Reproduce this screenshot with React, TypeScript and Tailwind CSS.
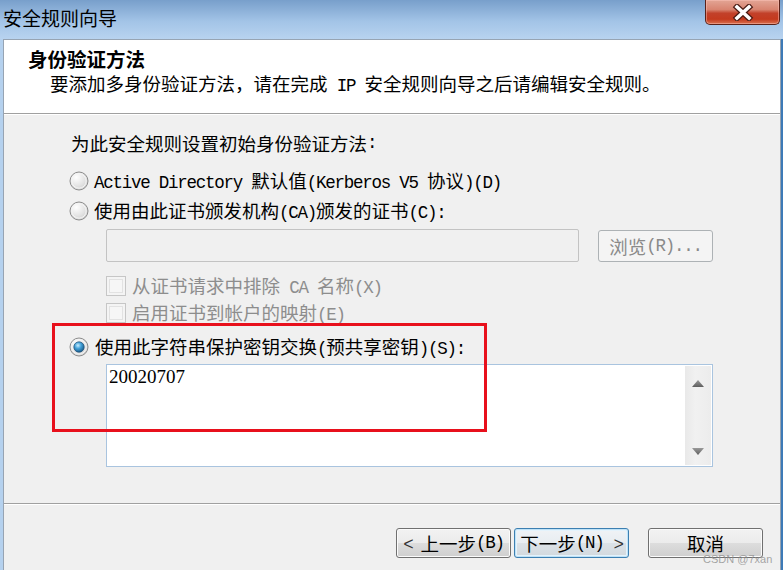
import React from "react";

const CJK = "font-['Noto_Sans_CJK_SC','Noto_Sans_CJK_JP',sans-serif]";

function M({ s }: { s: string }) {
  const parts = s.match(/[\x00-\x7F]+|[^\x00-\x7F]+/g) || [];
  return (
    <>
      {parts.map((p, i) =>
        /^[\x00-\x7F]+$/.test(p) ? (
          <span
            key={i}
            className="font-['Liberation_Mono',monospace] text-[17.5px] tracking-[-1.25px] whitespace-pre"
          >
            {p}
          </span>
        ) : (
          <span key={i}>{p}</span>
        )
      )}
    </>
  );
}

function Radio({ checked }: { checked?: boolean }) {
  return (
    <svg width="20" height="20" viewBox="0 0 20 20" className="shrink-0">
      <defs>
        <radialGradient id="rf" cx="0.35" cy="0.3" r="0.85">
          <stop offset="0" stopColor="#ffffff" />
          <stop offset="0.55" stopColor="#e4e4e4" />
          <stop offset="1" stopColor="#c8c8c8" />
        </radialGradient>
        <radialGradient id="rd" cx="0.4" cy="0.35" r="0.75">
          <stop offset="0" stopColor="#c8eeff" />
          <stop offset="0.4" stopColor="#45a3da" />
          <stop offset="1" stopColor="#0f4a78" />
        </radialGradient>
      </defs>
      <circle cx="10" cy="10" r="9" fill="url(#rf)" stroke="#8c8c8c" strokeWidth="1" />
      <circle cx="10" cy="10" r="7.2" fill="none" stroke="#f6f6f6" strokeWidth="1" />
      {checked && <circle cx="10" cy="10" r="5.2" fill="url(#rd)" stroke="#1c4d74" strokeWidth="0.7" />}
    </svg>
  );
}

function Check() {
  return (
    <div className="w-[20px] h-[20px] shrink-0 border border-[#c6c6c6] bg-[#f4f4f4] p-[2px]">
      <div className="w-full h-full border border-[#e2e2e2] bg-[#f6f6f6]" />
    </div>
  );
}

function Btn({
  children,
  def,
  className,
}: {
  children: React.ReactNode;
  def?: boolean;
  className?: string;
}) {
  return (
    <div
      className={
        "h-[30px] w-[115px] rounded-[3px] flex items-center justify-center text-[18.5px] leading-[22px] text-black " +
        (def
          ? "border border-[#3c7fb1] shadow-[inset_0_0_0_1px_#bfe2f7,inset_0_0_0_2px_#e4f3fc] bg-[linear-gradient(to_bottom,#f0f3f6_0%,#e8edf1_50%,#dce2e7_50%,#d2d9de_100%)] "
          : "border border-[#707070] shadow-[inset_0_0_0_1px_#fbfbfb] bg-[linear-gradient(to_bottom,#f2f2f2_0%,#ebebeb_50%,#dddddd_50%,#cfcfcf_100%)] ") +
        (className || "")
      }
    >
      {children}
    </div>
  );
}

function CloseBtn() {
  return (
    <div className="mr-[3px] w-[75px] h-[25px] rounded-b-[5px] border border-t-0 border-[#5a2118] shadow-[inset_0_0_0_1px_rgba(255,200,190,0.45)] bg-[linear-gradient(to_bottom,#e3a595_0%,#d88470_40%,#c2412a_55%,#c43a1e_80%,#d9714f_100%)] flex items-center justify-center">
      <svg width="22" height="17" viewBox="0 0 22 17">
        <path d="M5 3 L17 14 M17 3 L5 14" stroke="#4b1c14" strokeWidth="6" strokeLinecap="square" />
        <path d="M5 3 L17 14 M17 3 L5 14" stroke="#ffffff" strokeWidth="3.6" strokeLinecap="square" />
      </svg>
    </div>
  );
}

function Arrow({ up }: { up?: boolean }) {
  return (
    <svg width="12" height="7" viewBox="0 0 12 7">
      <defs>
        <linearGradient id="ag" x1="0" y1="0" x2="0" y2="1">
          <stop offset="0" stopColor="#9a9a9a" />
          <stop offset="1" stopColor="#5e5e5e" />
        </linearGradient>
      </defs>
      {up ? <path d="M0 7 L6 0 L12 7 Z" fill="url(#ag)" /> : <path d="M0 0 L12 0 L6 7 Z" fill="url(#ag)" />}
    </svg>
  );
}

export default function App() {
  return (
    <div
      className={`relative w-[783px] h-[570px] overflow-hidden flex flex-col bg-[linear-gradient(to_right,#b5d1ee_0px,#b5d1ee_776px,#3d7ab7_781px,#3d7ab7_783px)] ${CJK} text-black`}
    >
      {/* title bar */}
      <div className="h-[39px] shrink-0 flex items-start justify-between bg-[linear-gradient(to_bottom,#789fcb_0%,#a3c4e7_55%,#b8d3f0_100%)]">
        <div className="pl-[3px] pt-[6px] text-[19px] leading-[24px]">安全规则向导</div>
        <CloseBtn />
      </div>

      {/* window frame */}
      <div className="flex-1 ml-[3px] mr-[2px] border border-b-0 border-[#97a4b3] flex flex-col min-h-0">
        {/* header */}
        <div className="h-[73px] shrink-0 bg-white pt-[7px]">
          <div className="pl-[24px] text-[19.5px] leading-[24px] font-bold">身份验证方法</div>
          <div className="pl-[46px] mt-[1px] text-[18.5px] leading-[22px]">
            <M s="要添加多身份验证方法，请在完成 IP 安全规则向导之后请编辑安全规则。" />
          </div>
        </div>
        <div className="h-[2px] shrink-0 border-t border-[#a0a0a0] bg-white" />

        {/* body */}
        <div className="relative h-[388px] shrink-0 bg-[#f0f0f0] pl-[65px] text-[18.5px] leading-[22px] flex flex-col">
          <div className="mt-[17px] h-[22px] ml-[2px] flex items-center">
            <M s="为此安全规则设置初始身份验证方法:" />
          </div>
          <div className="mt-[16px] h-[22px] flex items-center gap-[5px]">
            <Radio />
            <div>
              <M s="Active Directory 默认值(Kerberos V5 协议)(D)" />
            </div>
          </div>
          <div className="mt-[8px] h-[22px] flex items-center gap-[5px]">
            <Radio />
            <div>
              <M s="使用由此证书颁发机构(CA)颁发的证书(C):" />
            </div>
          </div>
          <div className="mt-[7px] h-[33px] flex items-start">
            <div className="ml-[37px] w-[473px] h-[33px] border border-[#c3c3c3] rounded-[2px] bg-[#f0f0f0]" />
            <div className="ml-[19px] mt-[1px] w-[115px] h-[32px] rounded-[3px] border border-[#adb2b5] bg-[#f4f4f4] flex items-center justify-center text-[#8a8a8a]">
              <M s="浏览(R)..." />
            </div>
          </div>
          <div className="mt-[13px] h-[22px] ml-[37px] flex items-center gap-[6px] text-[#8d8d8d]">
            <Check />
            <div>
              <M s="从证书请求中排除 CA 名称(X)" />
            </div>
          </div>
          <div className="mt-[5px] h-[22px] ml-[37px] flex items-center gap-[6px] text-[#8d8d8d]">
            <Check />
            <div>
              <M s="启用证书到帐户的映射(E)" />
            </div>
          </div>
          <div className="mt-[12px] h-[22px] flex items-center gap-[6px]">
            <Radio checked />
            <div>
              <M s="使用此字符串保护密钥交换(预共享密钥)(S):" />
            </div>
          </div>
          <div className="mt-[6px] ml-[37px] w-[607px] h-[103px] border border-[#a9c4df] bg-white flex">
            <div className="flex-1 pl-[2px] pt-[1px] font-['Liberation_Serif',serif] text-[19px] leading-[22px]">
              20020707
            </div>
            <div className="w-[26px] my-[1px] mr-[1px] bg-[linear-gradient(to_right,#e9e9e9,#f1f1f1_40%,#ececec)] flex flex-col items-center justify-between pt-[14px] pb-[10px]">
              <Arrow up />
              <Arrow />
            </div>
          </div>

          {/* red annotation box */}
          <div className="absolute left-[48px] top-[208px] w-[435px] h-[109px] border-[3px] border-[#e8101c]" />
        </div>
        <div className="h-[2px] shrink-0 border-t border-[#a0a0a0] bg-white" />

        {/* footer */}
        <div className="flex-1 bg-[#f0f0f0] pt-[23px] pr-[17px] flex justify-end items-start">
          <Btn>
            <span className="mr-[8px] text-[#333]">
              <M s="<" />
            </span>
            <M s="上一步(B)" />
          </Btn>
          <Btn def className="ml-[3px]">
            <M s="下一步(N)" />
            <span className="ml-[10px] text-[#333]">
              <M s=">" />
            </span>
          </Btn>
          <Btn className="ml-[19px]">取消</Btn>
        </div>
      </div>

      <div className="absolute left-[703px] top-[553px] font-['Liberation_Sans',sans-serif] text-[11px] leading-[12px] text-[#8f8f8f]/80">
        CSDN @7xan
      </div>
    </div>
  );
}
